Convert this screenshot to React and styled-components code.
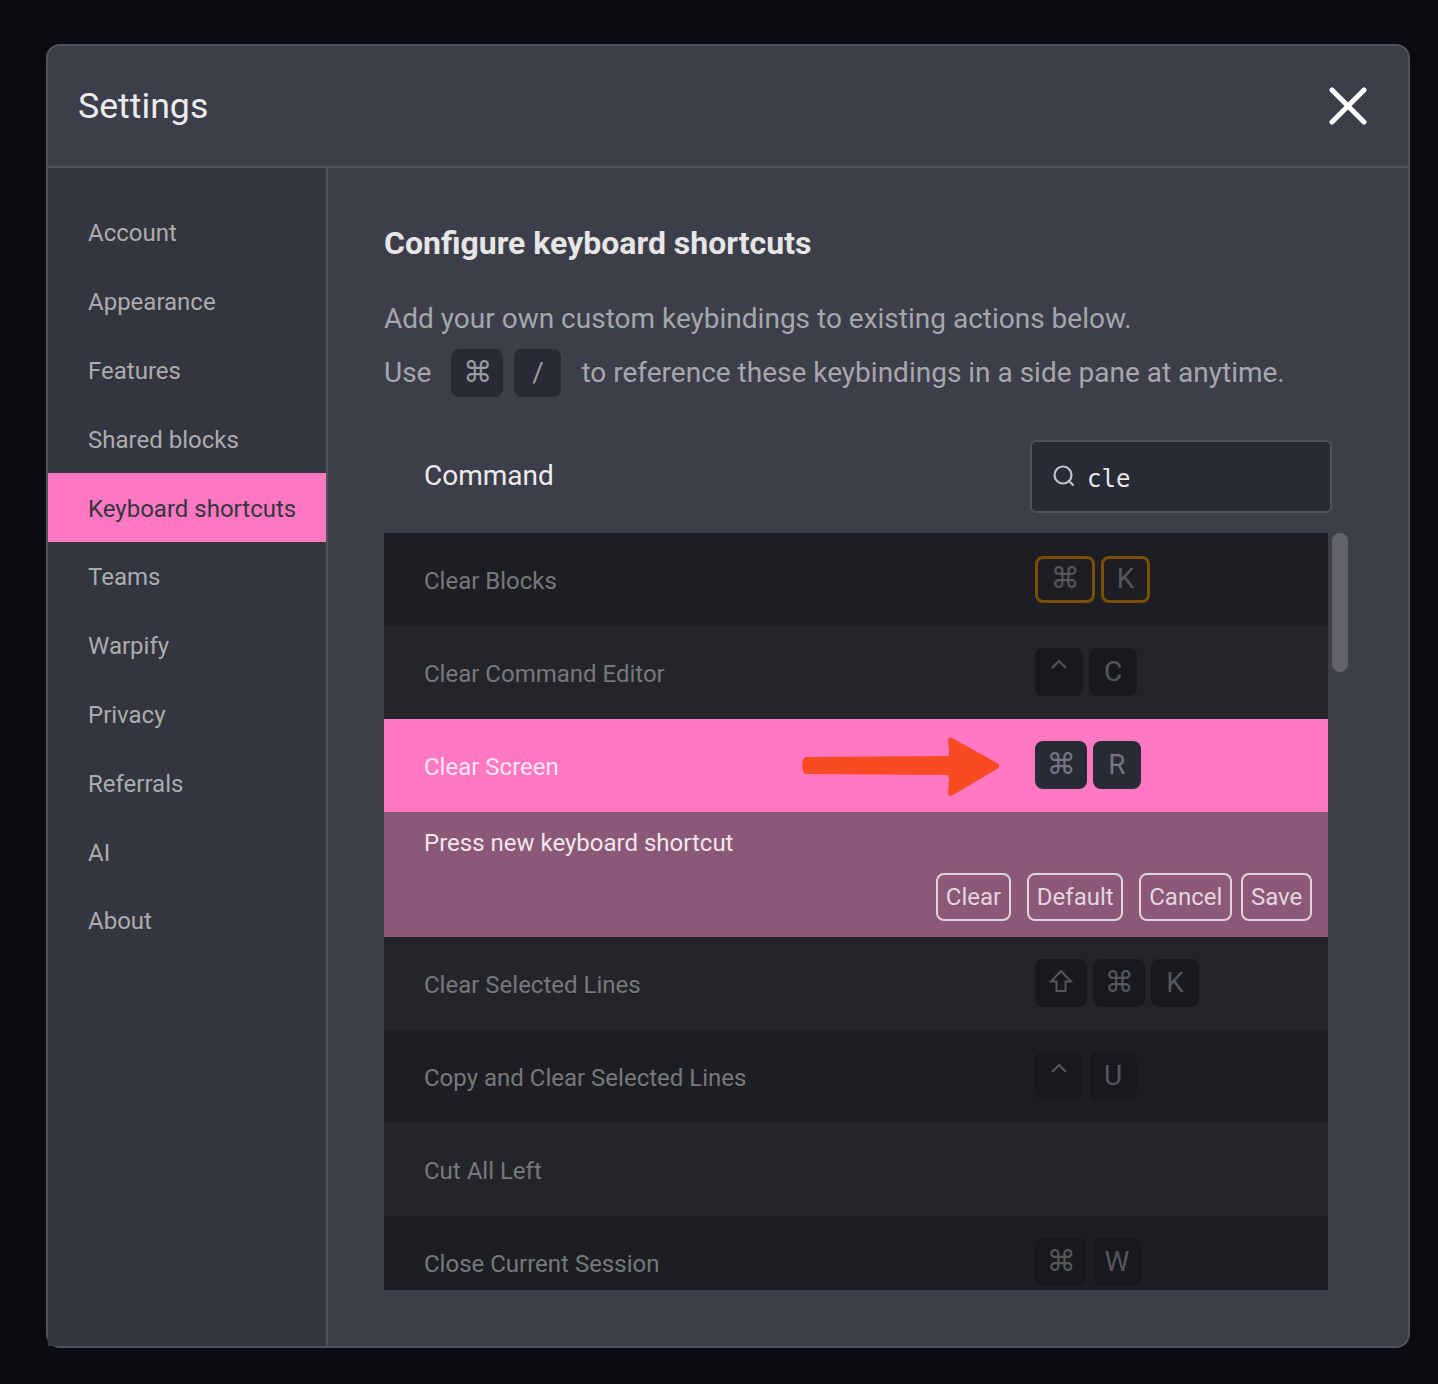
import React from "react";
import styled, { createGlobalStyle } from "styled-components";

const GlobalStyle = createGlobalStyle`
  html, body {
    margin: 0;
    padding: 0;
    background: #0b0c11;
  }
  * {
    box-sizing: border-box;
  }
`;

const Page = styled.div`
  width: 1438px;
  height: 1384px;
  padding: 44px 28px 36px 46px;
  background: #0b0c11;
  font-family: Roboto, "Liberation Sans", sans-serif;
`;
const Modal = styled.div`
  width: 1364px;
  height: 1304px;
  display: flex;
  flex-direction: column;
  background: #3c3e4a;
  border: 2px solid #50525c;
  border-radius: 14px;
`;
const Header = styled.div`
  height: 122px;
  flex: none;
  display: flex;
  align-items: center;
  justify-content: space-between;
  padding: 0 41px 0 30px;
  border-bottom: 2px solid #50525c;
`;
const Title = styled.h1`
  margin: 0;
  font-size: 35.7px;
  font-weight: 400;
  color: #ececec;
`;
const CloseButton = styled.button`
  width: 38px;
  height: 38px;
  padding: 0;
  background: none;
  border: 0;
  display: flex;
`;
const Body = styled.div`
  flex: 1;
  display: flex;
  min-height: 0;
`;
const Sidebar = styled.nav`
  width: 280px;
  flex: none;
  padding-top: 30px;
  background: #33353f;
  border-right: 2px solid #50525c;
`;
const NavItem = styled.div`
  height: 68.8px;
  padding: 2px 0 0 40px;
  display: flex;
  align-items: center;
  font-size: 24px;
  color: ${(props) => (props.$active ? "#33353f" : "#acacae")};
  background: ${(props) => (props.$active ? "#ff78c1" : "transparent")};
`;
const Main = styled.main`
  flex: 1;
  min-width: 0;
  padding: 53px 80px 0 56px;
`;
const Heading = styled.h2`
  margin: 0;
  font-size: 32px;
  line-height: 44px;
  font-weight: 700;
  color: #e6e6e6;
`;
const Para = styled.div`
  margin-top: 30px;
  height: 48px;
  padding-bottom: 2px;
  display: flex;
  align-items: center;
  font-size: 28px;
  color: #a6a7ab;
`;
const ParaKeys = styled.div`
  display: flex;
  gap: 11px;
  margin: 2px 20px 0;
`;
const SecondPara = styled(Para)`
  margin-top: 6px;
`;
const Key = styled.span`
  width: ${(props) => props.$w || 48}px;
  height: ${(props) => (props.$outline ? 47 : 48)}px;
  padding-bottom: 2px;
  display: flex;
  align-items: center;
  justify-content: center;
  border-radius: 8px;
  font-size: 28px;
  background: ${(props) => props.$bg};
  color: ${(props) => props.$fg};
  border: ${(props) => (props.$outline ? "3px solid #7a4e04" : "none")};
`;
const Glyph = styled.span`
  font-family: "DejaVu Sans", sans-serif;
  font-size: 29px;
  line-height: 1;
`;
const IconSvg = styled.svg`
  margin-top: ${(props) => props.$up}px;
`;
const CommandRow = styled.div`
  margin-top: 43px;
  margin-right: -4px;
  display: flex;
  align-items: center;
  justify-content: space-between;
  padding-left: 40px;
`;
const CommandLabel = styled.div`
  font-size: 28px;
  padding-bottom: 2px;
  color: #ececec;
`;
const SearchBox = styled.div`
  width: 302px;
  height: 73px;
  padding: 0 20px;
  display: flex;
  align-items: center;
  gap: 11px;
  background: #282a36;
  border: 2px solid #50525c;
  border-radius: 6px;
`;
const SearchIcon = styled.svg`
  margin-top: -2px;
`;
const SearchText = styled.span`
  font-family: "DejaVu Sans Mono", monospace;
  font-size: 24px;
  color: #e6e6e6;
  padding-top: 4px;
`;
const ListWrap = styled.div`
  position: relative;
  margin-top: 20px;
  height: 757px;
`;
const List = styled.div`
  height: 100%;
  overflow: hidden;
`;
const ScrollThumb = styled.div`
  position: absolute;
  top: 0;
  left: 948px;
  width: 16px;
  height: 139px;
  border-radius: 8px;
  background: #63636d;
`;
const Row = styled.div`
  position: relative;
  height: 93px;
  display: grid;
  grid-template-columns: 611px 1fr;
  align-items: center;
  padding-left: 40px;
  background: ${(props) => props.$bg};
`;
const RowLabel = styled.div`
  font-size: 24px;
  padding-top: 2px;
  color: ${(props) => props.$fg || "#77787c"};
`;
const RowKeys = styled.div`
  display: flex;
  gap: 6px;
  margin-top: -1px;
`;
const Arrow = styled.svg`
  position: absolute;
  left: 416px;
  top: 18px;
`;
const Expansion = styled.div`
  height: 125px;
  padding: 16px 16px 16px 40px;
  display: flex;
  flex-direction: column;
  justify-content: space-between;
  background: #8b5878;
`;
const Prompt = styled.div`
  font-size: 24px;
  line-height: 30px;
  color: #f2e6ee;
`;
const Actions = styled.div`
  display: flex;
  justify-content: flex-end;
`;
const ActionButton = styled.button`
  height: 48px;
  padding: 0 7.8px;
  margin-left: ${(props) => props.$gap}px;
  font-family: inherit;
  font-size: 24px;
  color: #e3d6de;
  background: transparent;
  border: 2px solid #e0d3dc;
  border-radius: 8px;
`;

const navItems = [
  "Account",
  "Appearance",
  "Features",
  "Shared blocks",
  "Keyboard shortcuts",
  "Teams",
  "Warpify",
  "Privacy",
  "Referrals",
  "AI",
  "About",
];

const DARK = "#1d1e23";
const LIGHT = "#24252a";

const CMD = { glyph: "⌘", w: 52 };
const SHIFT = { icon: "shift", w: 52 };
const CTRL = { icon: "ctrl", w: 48 };
const letter = (text) => ({ text, w: 48 });

const upperRows = [
  {
    name: "Clear Blocks",
    bg: DARK,
    keys: [
      { glyph: "⌘", w: 60, outline: true },
      { text: "K", w: 49, outline: true },
    ],
  },
  { name: "Clear Command Editor", bg: LIGHT, keys: [CTRL, letter("C")] },
];

const lowerRows = [
  { name: "Clear Selected Lines", bg: LIGHT, keys: [SHIFT, CMD, letter("K")] },
  { name: "Copy and Clear Selected Lines", bg: DARK, keys: [CTRL, letter("U")] },
  { name: "Cut All Left", bg: LIGHT, keys: [] },
  { name: "Close Current Session", bg: DARK, keys: [CMD, letter("W")] },
];

const KeyIcon = ({ name }) =>
  name === "ctrl" ? (
    <IconSvg $up={-14} width="18" height="10" viewBox="0 0 18 10" fill="none">
      <path d="M2 9 L9 2 L16 9" stroke="currentColor" strokeWidth="2" />
    </IconSvg>
  ) : (
    <IconSvg $up={-2} width="24" height="24" viewBox="0 0 24 24" fill="none">
      <path d="M12 2 L22 12.5 L16.5 12.5 L16.5 22 L7.5 22 L7.5 12.5 L2 12.5 Z" stroke="currentColor" strokeWidth="2" />
    </IconSvg>
  );

const KeyCaps = ({ keys, bg, fg }) => (
  <RowKeys>
    {keys.map((k, i) => (
      <Key
        key={i}
        $w={k.w}
        $bg={k.outline ? "transparent" : bg}
        $fg={fg}
        $outline={k.outline}
      >
        {k.icon && <KeyIcon name={k.icon} />}
        {k.glyph && <Glyph>{k.glyph}</Glyph>}
        {k.text}
      </Key>
    ))}
  </RowKeys>
);

const ShortcutRow = ({ row }) => (
  <Row $bg={row.bg}>
    <RowLabel>{row.name}</RowLabel>
    <KeyCaps keys={row.keys} bg="#17191f" fg="#56575b" />
  </Row>
);

export default function App() {
  return (
    <>
      <GlobalStyle />
      <Page>
        <Modal>
          <Header>
            <Title>Settings</Title>
            <CloseButton>
              <svg width="38" height="38" viewBox="0 0 38 38">
                <path
                  d="M3 3 L35 35 M35 3 L3 35"
                  stroke="#fff"
                  strokeWidth="5"
                  strokeLinecap="round"
                />
              </svg>
            </CloseButton>
          </Header>
          <Body>
            <Sidebar>
              {navItems.map((item) => (
                <NavItem key={item} $active={item === "Keyboard shortcuts"}>
                  {item}
                </NavItem>
              ))}
            </Sidebar>
            <Main>
              <Heading>Configure keyboard shortcuts</Heading>
              <Para>Add your own custom keybindings to existing actions below.</Para>
              <SecondPara>
                Use
                <ParaKeys>
                  <Key $w={52} $bg="#282a36" $fg="#9a9ba0">
                    <Glyph>⌘</Glyph>
                  </Key>
                  <Key $w={47} $bg="#282a36" $fg="#9a9ba0">
                    /
                  </Key>
                </ParaKeys>
                to reference these keybindings in a side pane at anytime.
              </SecondPara>
              <CommandRow>
                <CommandLabel>Command</CommandLabel>
                <SearchBox>
                  <SearchIcon width="24" height="24" viewBox="0 0 24 24" fill="none">
                    <circle cx="11" cy="11" r="8.5" stroke="#c4c4c6" strokeWidth="2.2" />
                    <path d="M17 17 L21 21" stroke="#c4c4c6" strokeWidth="2.2" strokeLinecap="round" />
                  </SearchIcon>
                  <SearchText>cle</SearchText>
                </SearchBox>
              </CommandRow>
              <ListWrap>
                <List>
                  {upperRows.map((row) => (
                    <ShortcutRow key={row.name} row={row} />
                  ))}
                  <Row $bg="#ff78c1">
                    <RowLabel $fg="#fde4f2">Clear Screen</RowLabel>
                    <KeyCaps keys={[CMD, letter("R")]} bg="#282a36" fg="#74767f" />
                    <Arrow width="202" height="60" viewBox="0 0 202 60">
                      <path
                        d="M6 20 L147 19 C149 19 149 17 149 14 L148 3 C148 0 150 0 152 1 L197 26 C200 28 200 30 197 32 L153 58 C150 60 148 59 148 56 L149 43 C149 40 148 38 146 38 L6 37 C1 37 1 20 6 20 Z"
                        fill="#f84b24"
                      />
                    </Arrow>
                  </Row>
                  <Expansion>
                    <Prompt>Press new keyboard shortcut</Prompt>
                    <Actions>
                      <ActionButton $gap={0}>Clear</ActionButton>
                      <ActionButton $gap={16}>Default</ActionButton>
                      <ActionButton $gap={16}>Cancel</ActionButton>
                      <ActionButton $gap={9}>Save</ActionButton>
                    </Actions>
                  </Expansion>
                  {lowerRows.map((row) => (
                    <ShortcutRow key={row.name} row={row} />
                  ))}
                </List>
                <ScrollThumb />
              </ListWrap>
            </Main>
          </Body>
        </Modal>
      </Page>
    </>
  );
}
